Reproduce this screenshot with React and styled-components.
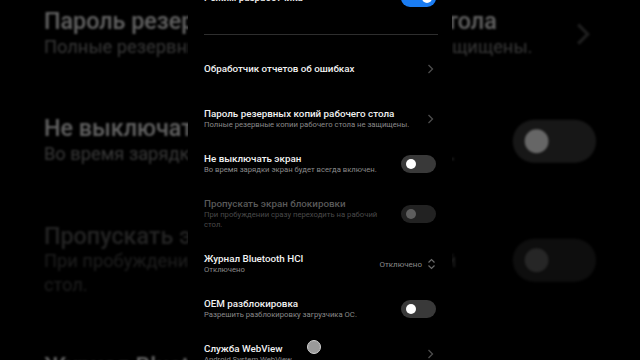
import React from "react";
import styled, { createGlobalStyle } from "styled-components";

const rows = [
  { title: "Режим разработчика", toggle: "on" },
  { divider: true },
  { title: "Обработчик отчетов об ошибках", chevron: true, spaced: true },
  {
    title: "Пароль резервных копий рабочего стола",
    sub: "Полные резервные копии рабочего стола не защищены.",
    chevron: true,
  },
  {
    title: "Не выключать экран",
    sub: "Во время зарядки экран будет всегда включен.",
    toggle: "off",
  },
  {
    title: "Пропускать экран блокировки",
    sub: "При пробуждении сразу переходить на рабочий стол.",
    toggle: "off",
    disabled: true,
  },
  { title: "Журнал Bluetooth HCI", sub: "Отключено", value: "Отключено" },
  {
    title: "OEM разблокировка",
    sub: "Разрешить разблокировку загрузчика ОС.",
    toggle: "off",
  },
  { title: "Служба WebView", sub: "Android System WebView", chevron: true },
];

const App = () => {
  return (
    <>
      <GlobalStyle />
      <Stage>
        <Backdrop>
          <SettingsList />
        </Backdrop>
        <Phone>
          <SettingsList />
          <TouchDot />
        </Phone>
      </Stage>
    </>
  );
};

export default App;

const SettingsList = () => (
  <List>
    {rows.map((r, i) =>
      r.divider ? (
        <Divider key={i} />
      ) : (
        <Row key={i} $spaced={r.spaced}>
          <TextContainer>
            <Title $disabled={r.disabled}>{r.title}</Title>
            {r.sub && <Subtitle $disabled={r.disabled}>{r.sub}</Subtitle>}
          </TextContainer>
          {r.toggle && <Toggle $on={r.toggle === "on"} $disabled={r.disabled} />}
          {r.chevron && (
            <Chevron viewBox="0 0 7 10">
              <polyline points="1.5,1 5.5,5 1.5,9" />
            </Chevron>
          )}
          {r.value && (
            <ValueBox>
              <Value>{r.value}</Value>
              <UpDown viewBox="0 0 9 12">
                <polyline points="1.5,4.5 4.5,1.5 7.5,4.5" />
                <polyline points="1.5,7.5 4.5,10.5 7.5,7.5" />
              </UpDown>
            </ValueBox>
          )}
        </Row>
      )
    )}
  </List>
);

const GlobalStyle = createGlobalStyle`
  html, body {
    margin: 0;
    padding: 0;
    background: #000;
  }
  body {
    font-family: Roboto, "Noto Sans", sans-serif;
  }
`;

const Stage = styled.div`
  position: relative;
  width: 640px;
  height: 360px;
  overflow: hidden;
  background: #000;
  display: flex;
  justify-content: center;
`;

const Backdrop = styled.div`
  position: absolute;
  top: 0;
  left: 188px;
  width: 264px;
  height: 360px;
  transform-origin: 132px 180.5px;
  transform: scale(2.38);
  filter: blur(0.45px) brightness(0.4);
`;

const Phone = styled.div`
  position: relative;
  z-index: 1;
  width: 264px;
  height: 360px;
  overflow: hidden;
  background: #000;
`;

const List = styled.div`
  display: flex;
  flex-direction: column;
  margin-top: -25px;
`;

const Row = styled.div`
  display: flex;
  align-items: center;
  min-height: 45px;
  box-sizing: border-box;
  padding: 11.5px 16px;
  margin-bottom: ${(p) => (p.$spaced ? "5px" : "0")};
`;

const TextContainer = styled.div`
  flex: 1;
  min-width: 0;
  padding-right: 12px;
`;

const Title = styled.div`
  font-size: 9.8px;
  line-height: 12px;
  font-weight: 500;
  color: ${(p) => (p.$disabled ? "#595959" : "#f2f2f2")};
  white-space: nowrap;
`;

const Subtitle = styled.div`
  font-size: 7.7px;
  line-height: 10px;
  color: ${(p) => (p.$disabled ? "#4a4a4a" : "#8a8a8a")};
`;

const Divider = styled.div`
  height: 1px;
  background: #2e2e2e;
  margin: 14px 14px 11.5px 16px;
`;

const Toggle = styled.span`
  position: relative;
  flex: none;
  width: 35px;
  height: 18px;
  border-radius: 9px;
  background: ${(p) =>
    p.$on ? "#1a7cf2" : p.$disabled ? "#222" : "#393939"};
  &::after {
    content: "";
    position: absolute;
    top: 4px;
    left: ${(p) => (p.$on ? "21px" : "5px")};
    width: 10px;
    height: 10px;
    border-radius: 50%;
    background: ${(p) => (p.$disabled ? "#5e5e5e" : "#fff")};
  }
`;

const Chevron = styled.svg`
  flex: none;
  width: 7px;
  height: 10px;
  margin-right: 2px;
  fill: none;
  stroke: #4d4d4d;
  stroke-width: 1.3;
`;

const ValueBox = styled.div`
  flex: none;
  display: flex;
  align-items: center;
  gap: 5px;
`;

const Value = styled.span`
  font-size: 8px;
  color: #8a8a8a;
`;

const UpDown = styled.svg`
  width: 9px;
  height: 12px;
  fill: none;
  stroke: #6a6a6a;
  stroke-width: 1.2;
`;

const TouchDot = styled.div`
  position: absolute;
  left: 119px;
  top: 340px;
  width: 14px;
  height: 14px;
  border-radius: 50%;
  box-sizing: border-box;
  background: #9a9a9a;
  border: 1.5px solid #d0d0d0;
`;
